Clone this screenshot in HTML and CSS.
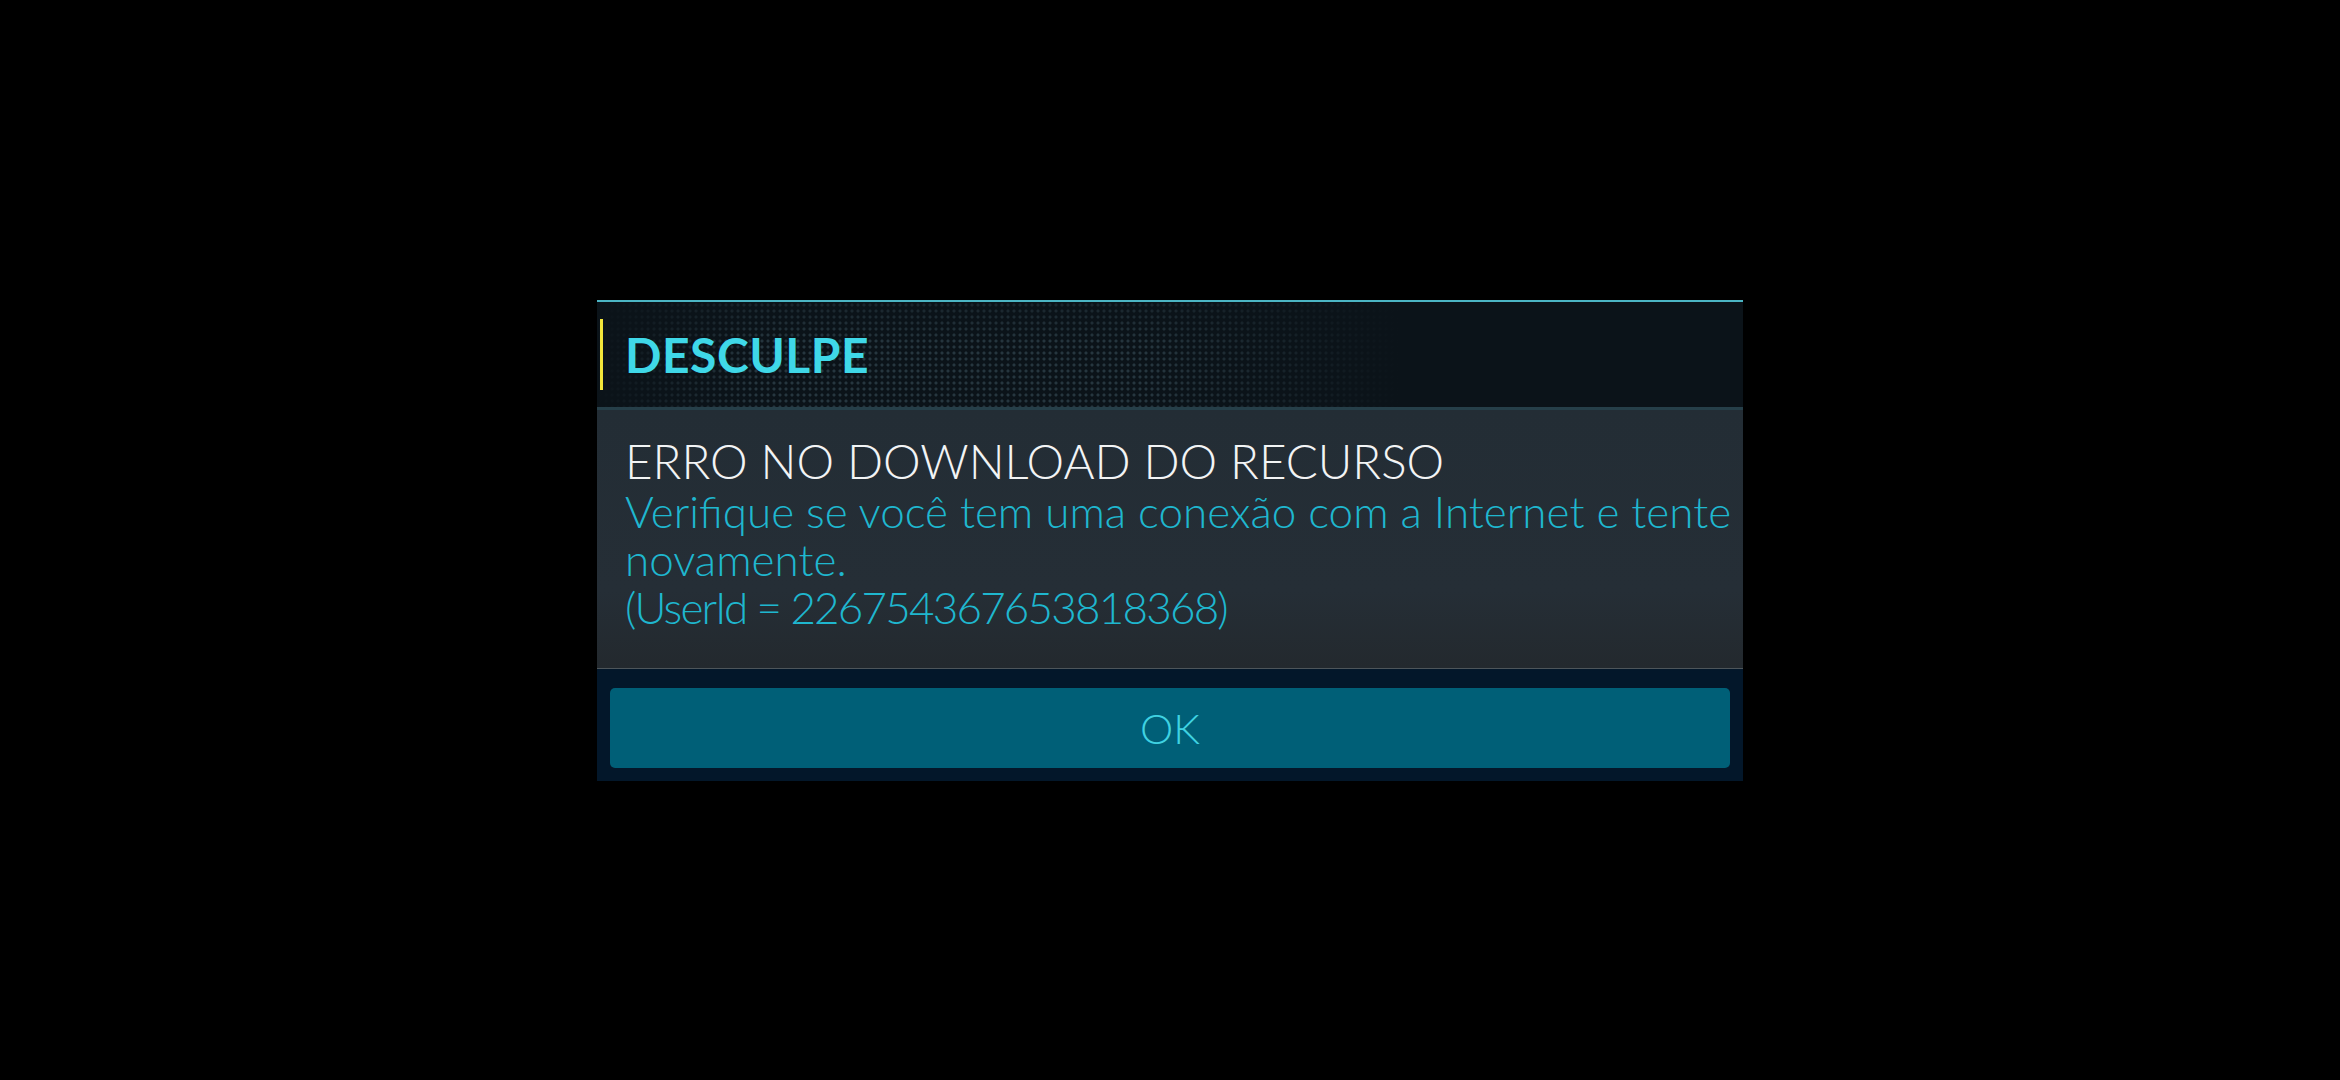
FILE: index.html
```html
<!DOCTYPE html>
<html lang="pt">
<head>
  <meta charset="UTF-8">
  <title>Desculpe</title>
  <link rel="stylesheet" href="styles.css">
</head>
<body>

<!-- Error dialog -->
<div class="dialog">
  <div class="dialog-header">
    <span class="accent"></span>
    <h1>DESCULPE</h1>
  </div>

  <div class="dialog-body">
    <div class="error-title">ERRO NO DOWNLOAD DO RECURSO</div>
    <div class="error-text">Verifique se você tem uma conexão com a Internet e tente novamente.<br><span class="user-id">(UserId = 226754367653818368)</span></div>
  </div>

  <div class="dialog-footer">
    <button class="ok-btn">OK</button>
  </div>
</div>

</body>
</html>
```

FILE: styles.css
```css
body { margin: 0; background: #000; height: 100vh; display: flex; align-items: center; justify-content: center; font-family: Lato, "Noto Sans", sans-serif; }

/* Dialog frame */
.dialog { width: 1146px; display: flex; flex-direction: column; }

.dialog-header {
  height: 105px;
  display: flex;
  align-items: center;
  border-top: 2px solid #4bb5c4;
  border-bottom: 3px solid #263f49;
  background:
    linear-gradient(to right, #0b1319 0%, rgba(11,19,25,0) 14%, rgba(11,19,25,0) 48%, #0b1319 70%),
    linear-gradient(to bottom, rgba(11,19,25,0.5) 0%, rgba(11,19,25,0) 40%),
    radial-gradient(circle, #26363f 1.3px, transparent 1.8px) 0 0 / 6px 6px,
    #0b1319;
}
.accent { width: 3px; height: 71px; background: #f2e53a; margin-left: 3px; }
.dialog-header h1 {
  margin: 0 0 0 22px;
  font-size: 48px;
  font-weight: 700;
  color: #3fd8e8;
  letter-spacing: 0.5px;
}

.dialog-body {
  padding: 25px 6px 37px 28px;
  background: linear-gradient(to bottom, #232d35, #252e36 70%, #23292e);
  border-bottom: 1px solid #4d555a;
}
.error-title { font-size: 47.5px; font-weight: 300; line-height: 52px; color: #f2f4f5; }
.error-text { font-size: 44px; font-weight: 300; line-height: 48px; color: #1fb7cf; }
.user-id { letter-spacing: -1.8px; }

.dialog-footer { padding: 19px 13px 13px; background: #03172a; }
.ok-btn {
  width: 100%;
  height: 80px;
  border: none;
  border-radius: 5px;
  background: #005f77;
  color: #3fd2e2;
  font-family: Lato, "Noto Sans", sans-serif;
  font-size: 42px;
  font-weight: 300;
  cursor: pointer;
}
```
